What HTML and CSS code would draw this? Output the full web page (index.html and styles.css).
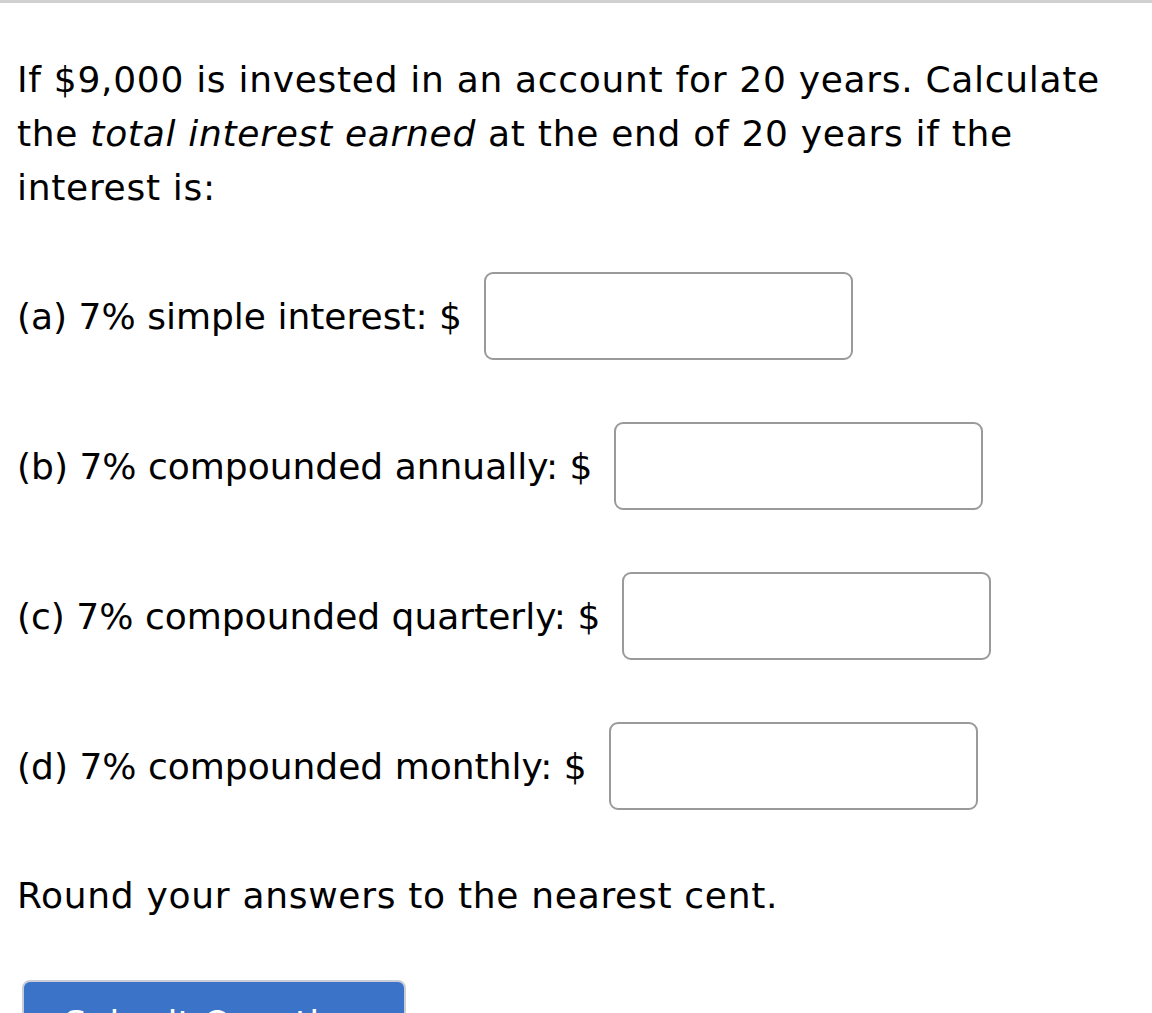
FILE: index.html
```html
<!DOCTYPE html>
<html>
<head>
<meta charset="utf-8">
<link rel="stylesheet" href="styles.css">
</head>
<body>
<div class="page">
  <div class="question">
    <p class="intro">If $9,000 is invested in an account for 20 years. Calculate the <em>total interest earned</em> at the end of 20 years if the interest is:</p>
    <div class="row"><span class="label">(a) 7% simple interest: $</span><input class="answer" type="text"></div>
    <div class="row"><span class="label">(b) 7% compounded annually: $</span><input class="answer" type="text"></div>
    <div class="row"><span class="label">(c) 7% compounded quarterly: $</span><input class="answer" type="text"></div>
    <div class="row"><span class="label">(d) 7% compounded monthly: $</span><input class="answer" type="text"></div>
    <p class="note">Round your answers to the nearest cent.</p>
    <button class="submit" type="button">Submit Question</button>
  </div>
</div>
</body>
</html>
```

FILE: styles.css
```css
html, body {
  margin: 0;
  padding: 0;
  background: #fff;
}
.page {
  border-top: 3px solid #d0d0d0;
  font-family: "DejaVu Sans", Verdana, sans-serif;
  font-size: 36px;
  color: #000;
}
.question {
  padding: 0 17px;
  width: 1100px;
}
.intro {
  margin: 50px 0 57px;
  line-height: 54px;
  letter-spacing: 0.7px;
}
.intro em {
  font-style: italic;
}
.row {
  display: flex;
  align-items: center;
  gap: 22px;
  margin-bottom: 62px;
}
.label {
  white-space: nowrap;
}
.answer {
  box-sizing: border-box;
  width: 369px;
  height: 88px;
  border: 2px solid #9a9a9a;
  border-radius: 9px;
  background: #fff;
  margin: 0;
  font-size: 36px;
}
.note {
  margin: -3px 0 57px;
  line-height: 54px;
  letter-spacing: 0.7px;
}
.submit {
  margin-left: 5px;
  width: 384px;
  height: 86px;
  background: #3b73c9;
  color: #fff;
  border: 2px solid #c9ced6;
  border-radius: 8px;
  font-family: "DejaVu Sans", Verdana, sans-serif;
  font-size: 36px;
  padding: 0;
}
```
